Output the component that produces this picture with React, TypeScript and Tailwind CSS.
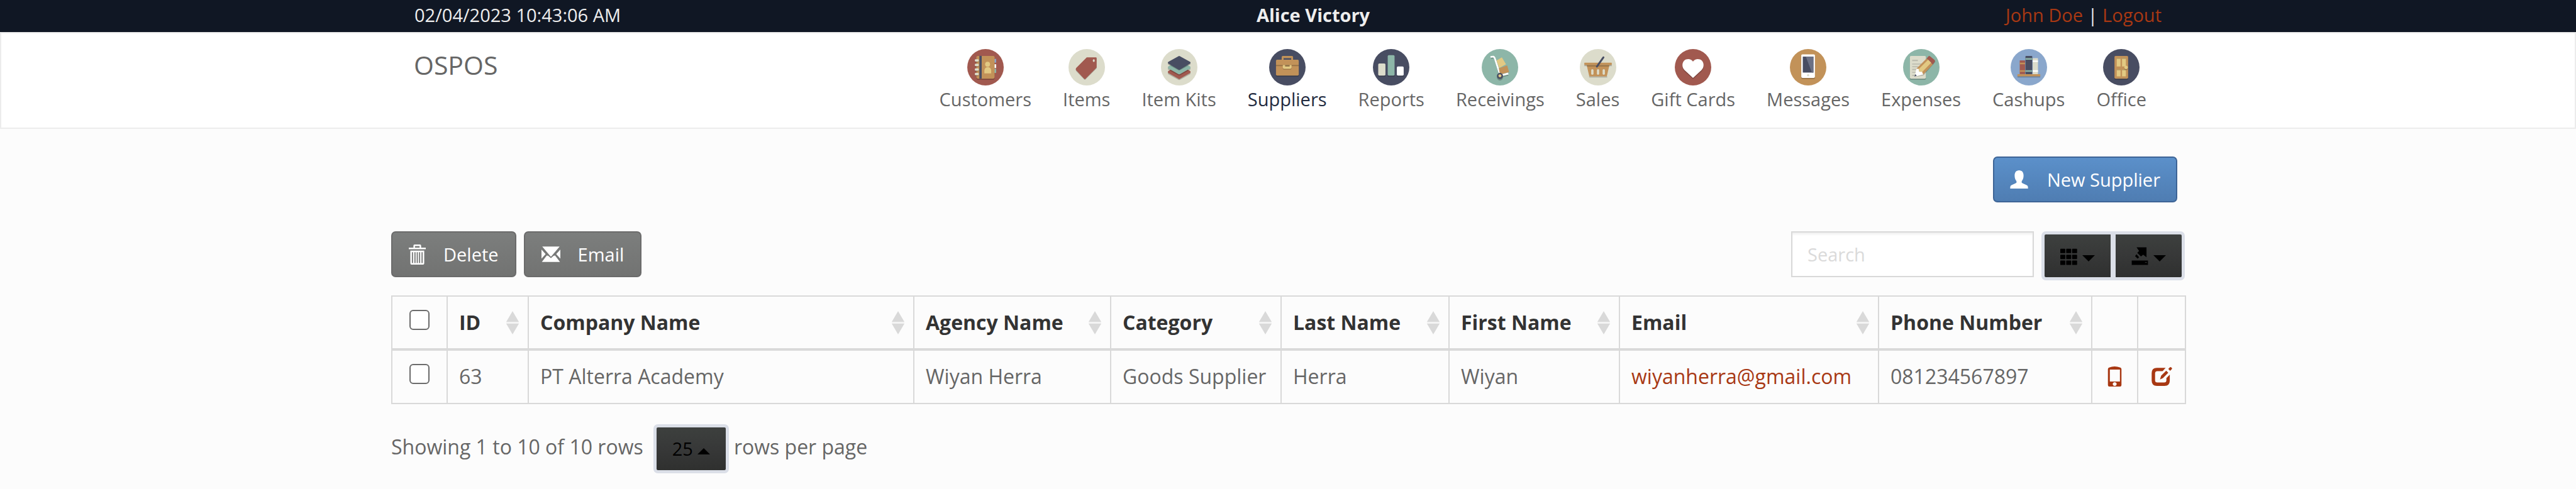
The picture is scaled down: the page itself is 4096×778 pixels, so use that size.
import type { ReactNode } from "react";

const RED = "#a1594f";
const CREAM = "#dcdccb";
const NAVY = "#484d62";
const TEAL = "#8db6a8";
const TAN = "#c29259";
const YELLOW = "#e2c983";
const BLUE = "#8aa7cc";
const SHADE = "rgba(0,0,0,0.22)";

function Disc({ fill, children }: { fill: string; children: ReactNode }) {
  return (
    <svg viewBox="0 0 96 96" className="size-[58px]" aria-hidden="true">
      <circle cx="48" cy="48" r="48" fill={fill} />
      {children}
    </svg>
  );
}

const CustomersIcon = () => (
  <Disc fill={RED}>
    <rect x="24" y="21" width="48" height="60" rx="4" fill={SHADE} />
    <rect x="71" y="26" width="5" height="10" fill={BLUE} />
    <rect x="71" y="40" width="5" height="10" fill="#fff" />
    <rect x="71" y="52" width="5" height="11" fill={TEAL} />
    <rect x="24" y="18" width="48" height="60" rx="4" fill={TAN} />
    <rect x="32" y="18" width="6" height="60" fill={NAVY} />
    {[27, 39, 51, 63].map((y) => (
      <g key={y}>
        <rect x="20" y={y + 2} width="10" height="6" rx="2" fill={SHADE} />
        <rect x="20" y={y} width="10" height="6" rx="2" fill={CREAM} />
      </g>
    ))}
    <circle cx="53.5" cy="40" r="6.5" fill={YELLOW} />
    <path d="M45 64V58C45 51 49 47.500 54 47.500S63 51 63 58V64Z" fill={YELLOW} />
  </Disc>
);

const ItemsIcon = () => (
  <Disc fill={CREAM}>
    <path d="M48 24H74V51L45 80Q43 82 41 80L20 58Q18 55 20 52Z" fill={SHADE} />
    <path d="M48 22H72Q74 22 74 24V49L45 78Q43 80 41 78L20 56Q18 53 20 50Z" fill={RED} />
    <rect x="64" y="27" width="5" height="7" rx="2.5" fill={CREAM} />
  </Disc>
);

const ItemKitsIcon = () => (
  <Disc fill={CREAM}>
    <path d="M48 44L77 62Q79 64 77 66L50 81Q48 82 46 81L19 66Q17 64 19 62Z" fill={SHADE} />
    <path d="M48 42L77 58Q79 61 77 63L50 78Q48 80 46 78L19 63Q17 61 19 58Z" fill={RED} />
    <path d="M48 32L77 50Q79 52 77 54L50 69Q48 70 46 69L19 54Q17 52 19 50Z" fill={SHADE} />
    <path d="M48 30L77 46Q79 49 77 51L50 66Q48 67 46 66L19 51Q17 49 19 46Z" fill={TEAL} />
    <path d="M46 21Q48 20 50 21L77 37Q79 39 77 41L50 56Q48 57 46 56L19 41Q17 39 19 37Z" fill={SHADE} />
    <path d="M46 19Q48 17 50 19L77 34Q79 36 77 38L50 54Q48 55 46 54L19 38Q17 36 19 34Z" fill={NAVY} />
  </Disc>
);

const SuppliersIcon = () => (
  <Disc fill={NAVY}>
    <rect x="18" y="31" width="60" height="42" rx="3" fill={SHADE} />
    <path d="M33 30V21Q33 18 36 18H60Q63 18 63 21V30H58V24H38V30Z" fill={TAN} />
    <rect x="18" y="28" width="60" height="42" rx="3" fill={TAN} />
    <rect x="18" y="42" width="60" height="3" fill={SHADE} />
    <rect x="36" y="45" width="23" height="9" rx="3" fill={SHADE} />
    <path d="M36 42H59V49Q59 52 56 52H39Q36 52 36 49Z" fill={YELLOW} />
    <rect x="42" y="42" width="12" height="4" fill="#8d6f45" />
  </Disc>
);

const ReportsIcon = () => (
  <Disc fill={NAVY}>
    <path d="M14 70H33V73H14ZM39 70H57V73H39ZM63 70H81V73H63Z" fill={SHADE} />
    <rect x="14" y="38" width="19" height="32" rx="3" fill={CREAM} />
    <rect x="39" y="16" width="18" height="54" rx="3" fill={TEAL} />
    <rect x="63" y="46" width="18" height="24" rx="3" fill="#fff" />
  </Disc>
);

const ReceivingsIcon = () => (
  <Disc fill={TEAL}>
    <path d="M25 24L30 23Q34 22 36 29L47 66M55 72L70 68" stroke={SHADE} strokeWidth="4" fill="none" />
    <path d="M25 20.500L29 20Q33 19 35 26L47 64" stroke="#fff" strokeWidth="4.500" fill="none" strokeLinecap="round" />
    <path d="M55 68.500L70 64.500" stroke="#fff" strokeWidth="5" />
    <path d="M39 30L53 22L64 40L46 50Z" fill={YELLOW} />
    <path d="M45 51L67 43L72 61L48 67Z" fill={TAN} />
    <circle cx="48" cy="75" r="8" fill={SHADE} />
    <circle cx="48" cy="71" r="8" fill={NAVY} />
    <circle cx="48" cy="70.500" r="4" fill={YELLOW} />
  </Disc>
);

const SalesIcon = () => (
  <Disc fill={CREAM}>
    <path d="M12 39H84V45H12ZM24 72H72V75H25Z" fill={SHADE} />
    <path d="M18 42H78L71 72H25Z" fill={TAN} />
    <path d="M18 42H78L77 46H19Z" fill={SHADE} />
    <rect x="12" y="36" width="72" height="6" rx="1" fill={TAN} />
    <rect x="30" y="53" width="6" height="15" rx="3" fill={CREAM} />
    <rect x="45" y="53" width="6" height="15" rx="3" fill={CREAM} />
    <rect x="60" y="53" width="6" height="15" rx="3" fill={CREAM} />
    <path d="M62 22L45 46" stroke={NAVY} strokeWidth="5" strokeLinecap="round" />
  </Disc>
);

const GiftIcon = () => (
  <Disc fill={RED}>
    <path d="M48 36C43 28 31 28 25 33C18 41 19 51 26 59L48 79L70 59C77 51 78 41 71 33C65 28 53 28 48 36Z" fill={SHADE} />
    <path d="M48 33C43 25 31 25 25 30C18 38 19 48 26 56L48 76L70 56C77 48 78 38 71 30C65 25 53 25 48 33Z" fill="#fff" />
  </Disc>
);

const MessagesIcon = () => (
  <Disc fill={TAN}>
    <rect x="30" y="17" width="36" height="62" rx="3" fill={SHADE} />
    <rect x="30" y="14" width="36" height="62" rx="3" fill="#fff" />
    <rect x="34" y="20" width="28" height="42" fill={NAVY} />
    <path d="M42 20H62V62H58Z" fill="#6b7084" />
    <circle cx="48" cy="69" r="3" fill={CREAM} />
  </Disc>
);

const ExpensesIcon = () => (
  <Disc fill={TEAL}>
    <rect x="18" y="21" width="42" height="60" rx="3" fill={SHADE} />
    <rect x="18" y="18" width="42" height="60" rx="3" fill={CREAM} />
    <path d="M24 28H39V32H24ZM24 38H48V41H24ZM24 45H40V48H24ZM24 52H35V56H24ZM24 60H34V63H24ZM24 68H36V71H24Z" fill="#bdbdb0" />
    <path d="M31 74L54 69L85 34L84 30L53 66Z" fill={SHADE} />
    <path d="M62 25L67 19Q69 17 71 19L83 29Q85 31 83 34L78 41Z" fill={RED} />
    <path d="M62 25L35 52L53 67L78 41Z" fill={TAN} />
    <path d="M66 28L41 53L42 60L50 61L74 36Z" fill={YELLOW} />
    <path d="M35 52L41 52L42 60L50 60L53 67L31 72Z" fill="#fff" />
    <path d="M32 66L36 70L30 73Z" fill={NAVY} />
  </Disc>
);

const CashupsIcon = () => (
  <Disc fill={BLUE}>
    <rect x="18" y="69" width="60" height="6" fill={SHADE} />
    <rect x="24" y="30" width="14" height="36" fill={RED} />
    <path d="M24 36H38V40H24ZM24 56H38V60H24Z" fill={TAN} />
    <rect x="58" y="24" width="14" height="42" rx="1" fill={CREAM} />
    <path d="M58 30H72V34H58ZM58 56H72V60H58Z" fill="#fff" />
    <rect x="39" y="18" width="18" height="48" rx="2" fill={NAVY} />
    <path d="M39 24H57V28H39ZM39 56H57V60H39Z" fill={TEAL} />
    <rect x="18" y="66" width="60" height="6" rx="1" fill={TAN} />
  </Disc>
);

const OfficeIcon = () => (
  <Disc fill={NAVY}>
    <rect x="30" y="21" width="36" height="60" rx="3" fill={SHADE} />
    <rect x="30" y="18" width="36" height="60" rx="3" fill={TAN} />
    <path d="M36 24H46V46H36ZM50 24H60V46H50ZM36 54H46V72H36ZM50 54H60V72H50Z" fill={YELLOW} />
    <path d="M36 24H46V26H36ZM50 24H60V26H50ZM36 54H46V56H36ZM50 54H60V56H50Z" fill={SHADE} />
    <circle cx="60.500" cy="51" r="4.500" fill={SHADE} />
    <circle cx="60.500" cy="48.500" r="4.500" fill={YELLOW} />
  </Disc>
);

const modules = [
  { name: "Customers", Icon: CustomersIcon },
  { name: "Items", Icon: ItemsIcon },
  { name: "Item Kits", Icon: ItemKitsIcon },
  { name: "Suppliers", Icon: SuppliersIcon, active: true },
  { name: "Reports", Icon: ReportsIcon },
  { name: "Receivings", Icon: ReceivingsIcon },
  { name: "Sales", Icon: SalesIcon },
  { name: "Gift Cards", Icon: GiftIcon },
  { name: "Messages", Icon: MessagesIcon },
  { name: "Expenses", Icon: ExpensesIcon },
  { name: "Cashups", Icon: CashupsIcon },
  { name: "Office", Icon: OfficeIcon },
];

const columns = [
  { name: "ID", width: "w-[129px]", value: "63" },
  { name: "Company Name", width: "w-[613px]", value: "PT Alterra Academy" },
  { name: "Agency Name", width: "w-[313px]", value: "Wiyan Herra" },
  { name: "Category", width: "w-[271px]", value: "Goods Supplier" },
  { name: "Last Name", width: "w-[267px]", value: "Herra" },
  { name: "First Name", width: "w-[271px]", value: "Wiyan" },
  { name: "Email", width: "w-[412px]", value: "wiyanherra@gmail.com", link: true },
  { name: "Phone Number", width: "w-[339px]", value: "081234567897" },
];

const TrashIcon = () => (
  <svg viewBox="0 0 44 52" className="h-8 w-[27px]" fill="currentColor" aria-hidden="true">
    <path d="M0 8H12V3Q12 0 15 0H29Q32 0 32 3V8H44V12H0ZM16 4V8H28V4Z" fillRule="evenodd" />
    <path
      d="M4 16H40V49Q40 52 37 52H7Q4 52 4 49ZM8 20V48H11V20ZM14.500 20V48H17.500V20ZM20.500 20V48H23.500V20ZM26.500 20V48H29.500V20ZM33 20V48H36V20Z"
      fillRule="evenodd"
    />
  </svg>
);

const EnvelopeIcon = () => (
  <svg viewBox="0 0 50 41" className="h-[25px] w-[30px]" fill="currentColor" aria-hidden="true">
    <path d="M2 0H48L28 24L25 27L22 24ZM0 8L11 20L0 32ZM50 8L39 20L50 32ZM1 41L14 24L18 24.500L25 31L32 24.500L36 24L49 41Z" />
  </svg>
);

const UserIcon = () => (
  <svg viewBox="0 0 48 49" className="size-[29px]" fill="currentColor" aria-hidden="true">
    <path d="M24 0C32 0 36 6 36 14C36 21 34 26 31 29V33C31 35 46 39 47 42Q48 44 48 49H0Q0 44 1 42C2 39 17 35 17 33V29C14 26 12 21 12 14C12 6 16 0 24 0Z" />
  </svg>
);

const GridIcon = () => (
  <svg viewBox="0 0 46 48" className="h-[29px] w-[27px]" fill="currentColor" aria-hidden="true">
    {[4, 20, 36].map((y) =>
      [0, 16, 32].map((x) => <rect key={x + "-" + y} x={x} y={y} width="13.500" height="12" rx="1.500" />),
    )}
  </svg>
);

const ExportIcon = () => (
  <svg viewBox="0 0 46 48" className="h-[29px] w-[27px]" fill="currentColor" aria-hidden="true">
    <path d="M14 0H41V27L32 20L26 25L16 15L21 10Z" />
    <path d="M14 19L21 27L17 31L10 24Z" />
    <path d="M1 36H45V48H1ZM37 40V42H42V40Z" fillRule="evenodd" />
  </svg>
);

const Caret = ({ up = false }: { up?: boolean }) => (
  <svg viewBox="0 0 20 10" className="mt-2 h-2.5 w-5" fill="currentColor" aria-hidden="true">
    <path d={up ? "M0 10H20L10 0Z" : "M0 0H20L10 10Z"} />
  </svg>
);

const SortIcon = () => (
  <svg viewBox="0 0 20 37" className="h-[37px] w-5 shrink-0" aria-hidden="true">
    <path d="M0 17H20V20H0Z" fill="#f3f3f3" />
    <path d="M0 17H20L10 0ZM0 20H20L10 37Z" fill="#d9d9d9" />
  </svg>
);

const PhoneIcon = () => (
  <svg viewBox="0 0 37 52" className="h-8 w-[23px]" fill="currentColor" aria-hidden="true">
    <path
      d="M1 7Q1 4 4 3Q18 -3 33 3Q36 4 36 7V48Q36 52 33 52H4Q1 52 1 48ZM6 8V39H32V8ZM18.500 40.500A5 5 0 1 0 18.510 40.500Z"
      fillRule="evenodd"
    />
  </svg>
);

const EditIcon = () => (
  <svg viewBox="0 0 54 50" className="h-[30px] w-[33px]" fill="currentColor" aria-hidden="true">
    <path d="M37 2H14Q0 2 0 16V36Q0 50 14 50H34Q48 50 48 36V20L39 29V35Q39 41 33 41H15Q9 41 9 35V17Q9 11 15 11H29Z" />
    <path d="M38.500 9.500L44 15L30 29L22 33L25 23Z" />
    <path d="M44 5L48 1Q50 -1 52 1L53 2Q55 4 53 6L49 10Z" />
  </svg>
);

const greyButton =
  "flex h-[73px] items-center gap-7 rounded-[7px] border-2 border-[#6b6b6b] bg-linear-to-b from-[#7c7e7d] to-[#727372] px-[26px] text-[29px] text-white";
const darkButton =
  "flex items-center border-[#dbdfe8] bg-linear-to-b from-[#3d403e] via-[#373838] to-[#2f302f] px-[25px] text-[29px] text-black";
const checkbox =
  "block size-8 appearance-none rounded-[6px] border-2 border-[#6b6b6b] bg-white checked:bg-[#446e9b]";
const cell = "border-2 border-[#d9d9d9]";

export default function App() {
  return (
    <div className="min-h-screen bg-[#fcfcfc] font-['Open_Sans',sans-serif] text-[32px] text-[#666]">
      <div className="bg-[#101724] text-[29px] text-[#eee]">
        <div className="mx-auto flex h-[51px] w-full max-w-[2852px] items-center justify-between px-[37px] pb-1">
          <div>02/04/2023 10:43:06 AM</div>
          <div className="font-bold">Alice Victory</div>
          <div>
            <a href="#profile" className="text-[#a83813]">John Doe</a>
            {" | "}
            <a href="#logout" className="text-[#a83813]">Logout</a>
          </div>
        </div>
      </div>

      <header className="border-2 border-[#ececec] bg-white">
        <div className="mx-auto flex h-[150px] w-full max-w-[2852px] justify-between px-[36px]">
          <a href="#home" className="pt-5 text-[41px] leading-[60px]">OSPOS</a>
          <nav className="flex pt-[25px]">
            {modules.map(({ name, Icon, active }) => (
              <a
                key={name}
                href={"#" + name}
                className={
                  "flex flex-col items-center px-[25px] text-[29px] leading-[44px] " +
                  (active ? "text-[#222b3f]" : "text-[#666]")
                }
              >
                <Icon />
                {name}
              </a>
            ))}
          </nav>
        </div>
      </header>

      <main className="mx-auto w-full max-w-[2852px] pt-11">
        <div className="flex justify-end pr-3">
          <button className="flex h-[73px] items-center gap-[30px] rounded-[7px] border-2 border-[#3d6496] bg-linear-to-b from-[#5b90ca] to-[#4f7db2] px-[25px] text-[29px] text-white">
            <UserIcon />
            New Supplier
          </button>
        </div>

        <div className="mt-[46px] flex items-start justify-between">
          <div className="flex gap-3">
            <button className={greyButton}>
              <TrashIcon />
              Delete
            </button>
            <button className={greyButton}>
              <EnvelopeIcon />
              Email
            </button>
          </div>
          <div className="flex items-start gap-3">
            <input
              type="search"
              aria-label="Search"
              placeholder="Search"
              className="h-[73px] w-[386px] border-2 border-[#d9d9d9] bg-white px-6 text-[29px] shadow-[inset_0_3px_3px_rgba(0,0,0,0.06)] placeholder:text-[#dadada]"
            />
            <div className="flex h-[78px]">
              <button aria-label="Columns" className={darkButton + " gap-2 rounded-l-[7px] border-y-5 border-r-4 border-l-5"}>
                <GridIcon />
                <Caret />
              </button>
              <button aria-label="Export" className={darkButton + " gap-2 rounded-r-[7px] border-y-5 border-r-5 border-l-4"}>
                <ExportIcon />
                <Caret />
              </button>
            </div>
          </div>
        </div>

        <table className="mt-6 w-full table-fixed border-collapse">
          <thead>
            <tr className="h-[85px]">
              <th className={cell + " w-[88px] border-b-4 pb-2"}>
                <div className="flex justify-center">
                  <input type="checkbox" aria-label="Select all" className={checkbox} />
                </div>
              </th>
              {columns.map((c) => (
                <th key={c.name} className={cell + " border-b-4 pr-3.5 pl-[18px] text-left font-bold text-[#333] " + c.width}>
                  <div className="flex items-center justify-between whitespace-nowrap">
                    {c.name}
                    <SortIcon />
                  </div>
                </th>
              ))}
              <th className={cell + " w-[73px] border-b-4"} />
              <th className={cell + " w-[76px] border-b-4"} />
            </tr>
          </thead>
          <tbody>
            <tr className="h-[86px]">
              <td className={cell + " pb-2.5"}>
                <div className="flex justify-center">
                  <input type="checkbox" aria-label="Select supplier 63" className={checkbox} />
                </div>
              </td>
              {columns.map((c) => (
                <td key={c.name} className={cell + " pb-0.5 pl-[18px] whitespace-nowrap"}>
                  {c.link ? (
                    <a href={"mailto:" + c.value} className="text-[#a83813]">{c.value}</a>
                  ) : (
                    c.value
                  )}
                </td>
              ))}
              <td className={cell + " pb-0.5"}>
                <a href="#sms" aria-label="Send message" className="flex justify-center text-[#a83813]">
                  <PhoneIcon />
                </a>
              </td>
              <td className={cell + " pb-0.5"}>
                <a href="#edit" aria-label="Update supplier" className="flex justify-center text-[#a83813]">
                  <EditIcon />
                </a>
              </td>
            </tr>
          </tbody>
        </table>

        <div className="mt-8 flex items-center">
          <span className="pb-1.5">Showing 1 to 10 of 10 rows</span>
          <button className={darkButton + " mr-2 ml-4 h-[78px] gap-[7px] rounded-[7px] border-5"}>
            25
            <Caret up />
          </button>
          <span className="pb-1.5">rows per page</span>
        </div>
      </main>
    </div>
  );
}
